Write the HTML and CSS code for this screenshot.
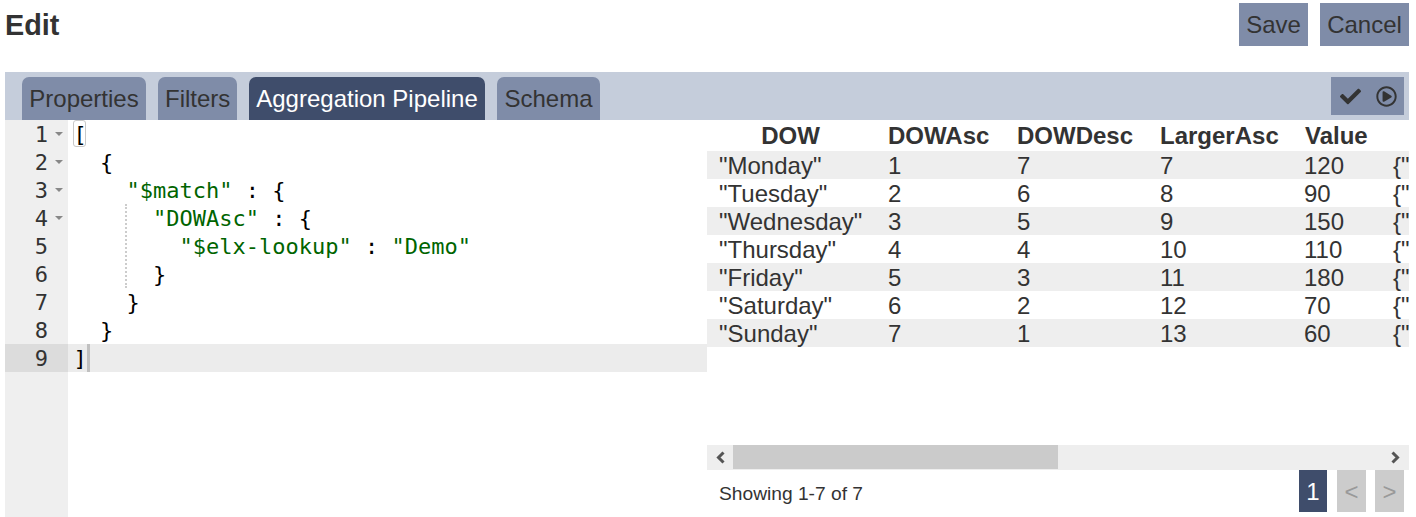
FILE: index.html
```html
<!DOCTYPE html>
<html lang="en">
<head>
<meta charset="utf-8">
<title>Edit</title>
<link rel="stylesheet" href="styles.css">
</head>
<body>
<div class="page">
  <header class="top">
    <h1 class="title">Edit</h1>
    <div class="actions">
      <button class="btn btn-save">Save</button>
      <button class="btn btn-cancel">Cancel</button>
    </div>
  </header>
  <nav class="tabbar">
    <div class="tabs">
      <a class="tab tab-a">Properties</a>
      <a class="tab tab-b">Filters</a>
      <a class="tab tab-c active">Aggregation Pipeline</a>
      <a class="tab tab-d">Schema</a>
    </div>
    <div class="tools">
      <svg class="ico-check" viewBox="0 0 512 512"><path d="M173.898 439.404l-166.4-166.4c-9.997-9.997-9.997-26.206 0-36.204l36.203-36.204c9.997-9.998 26.207-9.998 36.204 0L192 312.69 432.095 72.596c9.997-9.997 26.207-9.997 36.204 0l36.203 36.204c9.997 9.997 9.997 26.206 0 36.204l-294.4 294.401c-9.998 9.997-26.207 9.997-36.204-.001z"/></svg>
      <svg class="ico-play" viewBox="0 0 512 512"><path d="M371.7 238l-176-107c-15.8-8.8-35.7 2.5-35.7 21v208c0 18.4 19.8 29.8 35.7 21l176-101c16.4-9.1 16.4-32.8 0-42zM504 256C504 119 393 8 256 8S8 119 8 256s111 248 248 248 248-111 248-248zm-448 0c0-110.5 89.5-200 200-200s200 89.5 200 200-89.5 200-200 200S56 366.5 56 256z"/></svg>
    </div>
  </nav>
  <main class="split">
    <section class="editor">
      <div class="gutter">
        <div class="gl">1<i class="fold"></i></div>
        <div class="gl">2<i class="fold"></i></div>
        <div class="gl">3<i class="fold"></i></div>
        <div class="gl">4<i class="fold"></i></div>
        <div class="gl">5<i class="nofold"></i></div>
        <div class="gl">6<i class="nofold"></i></div>
        <div class="gl">7<i class="nofold"></i></div>
        <div class="gl">8<i class="nofold"></i></div>
        <div class="gl gl-active">9<i class="nofold"></i></div>
      </div>
      <div class="code">
        <div class="bracket-box"></div>
        <div class="guide"></div>
        <div class="cl">[</div>
        <div class="cl">  {</div>
        <div class="cl">    <span class="str">"$match"</span> : {</div>
        <div class="cl">      <span class="str">"DOWAsc"</span> : {</div>
        <div class="cl">        <span class="str">"$elx-lookup"</span> : <span class="str">"Demo"</span></div>
        <div class="cl">      }</div>
        <div class="cl">    }</div>
        <div class="cl">  }</div>
        <div class="cl cl-active">]<span class="caret"></span></div>
      </div>
    </section>
    <section class="results">
      <div class="tablewrap">
        <table class="grid">
          <colgroup><col class="c1"><col class="c2"><col class="c3"><col class="c4"><col class="c5"><col class="c6"></colgroup>
          <thead><tr><th>DOW</th><th>DOWAsc</th><th>DOWDesc</th><th>LargerAsc</th><th>Value</th><th></th></tr></thead>
          <tbody>
            <tr><td>"Monday"</td><td>1</td><td>7</td><td>7</td><td>120</td><td>{"</td></tr>
            <tr><td>"Tuesday"</td><td>2</td><td>6</td><td>8</td><td>90</td><td>{"</td></tr>
            <tr><td>"Wednesday"</td><td>3</td><td>5</td><td>9</td><td>150</td><td>{"</td></tr>
            <tr><td>"Thursday"</td><td>4</td><td>4</td><td>10</td><td>110</td><td>{"</td></tr>
            <tr><td>"Friday"</td><td>5</td><td>3</td><td>11</td><td>180</td><td>{"</td></tr>
            <tr><td>"Saturday"</td><td>6</td><td>2</td><td>12</td><td>70</td><td>{"</td></tr>
            <tr><td>"Sunday"</td><td>7</td><td>1</td><td>13</td><td>60</td><td>{"</td></tr>
          </tbody>
        </table>
      </div>
      <div class="hscroll">
        <div class="sb-btn"><svg viewBox="0 0 12 13"><path d="M9.5 1.5L4.5 6.5l5 5" fill="none" stroke="#555" stroke-width="3"/></svg></div>
        <div class="sb-track"><div class="sb-thumb"></div></div>
        <div class="sb-btn"><svg viewBox="0 0 12 13"><path d="M2.5 1.5l5 5-5 5" fill="none" stroke="#555" stroke-width="3"/></svg></div>
      </div>
      <div class="pager">
        <span class="count">Showing 1-7 of 7</span>
        <div class="pages">
          <span class="pg pg-cur">1</span>
          <span class="pg pg-off pg-prev">&lt;</span>
          <span class="pg pg-off">&gt;</span>
        </div>
      </div>
    </section>
  </main>
</div>
</body>
</html>
```
FILE: styles.css
```css
* { box-sizing: border-box; }
html, body { margin: 0; height: 100%; background: #fff; overflow: hidden; }
body { font-family: "Liberation Sans", Arial, sans-serif; font-size: 24px; color: #333; }
.page { height: 517px; padding: 0 7px 0 5px; display: flex; flex-direction: column; }

.top { height: 72px; display: flex; justify-content: space-between; align-items: flex-start; flex: none; }
.title { margin: 9px 0 0; font-size: 28.8px; line-height: 33px; font-weight: bold; color: #333; }
.actions { display: flex; gap: 12px; padding-top: 3px; }
.btn { height: 43px; border: 0; padding: 0; background: #7f8ca8; color: #333; font: inherit; }
.btn-save { width: 69px; }
.btn-cancel { width: 89px; }

.tabbar { flex: none; height: 48px; background: #c5cddb; display: flex; justify-content: space-between; padding: 5px 5px 0 17px; }
.tabs { display: flex; gap: 12px; }
.tab { height: 43px; line-height: 44px; padding: 0 7px; background: #7f8ca8; color: #333; border-radius: 7px 7px 0 0; text-align: center; }
.tab-a { width: 124px; }
.tab-b { width: 79px; }
.tab-c { width: 236px; }
.tab-d { width: 103px; }
.tab.active { background: #3f4d6b; color: #fff; }
.tools { width: 73px; height: 38px; background: #7f8ca8; display: flex; align-items: center; padding-left: 9px; gap: 15px; }
.ico-check { width: 21px; height: 21px; fill: #333; flex: none; }
.ico-play { width: 21px; height: 21px; fill: #333; flex: none; }

.split { flex: 1; display: flex; min-height: 0; }
.editor { width: 702px; flex: none; display: flex; font-family: "DejaVu Sans Mono", monospace; font-size: 22px; line-height: 28px; color: #000; }
.gutter { width: 63px; flex: none; background: #efefef; color: #333; }
.gl { height: 28px; display: flex; justify-content: flex-end; align-items: center; padding: 1px 5px 0 0; }
.gl-active { background: #dcdcdc; }
.fold { width: 15px; height: 100%; position: relative; flex: none; }
.fold::after { content: ""; position: absolute; left: 7px; top: 11px; border: 4px solid transparent; border-top: 4px solid #888; border-bottom: 0; }
.nofold { width: 15px; flex: none; }
.code { flex: 1; position: relative; }
.cl { height: 28px; padding: 1px 0 0 5.5px; white-space: pre; }
.cl-active { background: #ececec; position: relative; }
.str { color: #006400; }
.caret { position: absolute; left: 19px; top: 0; width: 3px; height: 28px; background: #c0c0c0; }
.bracket-box { position: absolute; left: 5px; top: 0; width: 13px; height: 27px; border: 1px solid #c8c8c8; border-radius: 3px; }
.guide { position: absolute; left: 57px; top: 84px; height: 84px; border-left: 2px dotted #ccc; }

.results { flex: 1; min-width: 0; display: flex; flex-direction: column; }
.tablewrap { height: 325px; overflow: hidden; flex: none; }
.grid { table-layout: fixed; width: 1404px; border-collapse: collapse; }
.c1 { width: 169px; }
.c2 { width: 129px; }
.c3 { width: 143px; }
.c4 { width: 145px; }
.c5 { width: 88px; }
.grid th { height: 31px; padding: 0 12px; font-weight: bold; text-align: center; white-space: nowrap; }
.grid th:first-child { padding-right: 14px; }
.grid th:not(:first-child) { text-align: left; }
.grid td { height: 28px; padding: 1px 12px 0; line-height: 27px; white-space: nowrap; overflow: hidden; }
.grid td:first-child { padding-right: 0; }
.grid td:nth-child(5) { padding-left: 11px; }
.grid tbody tr:nth-child(odd) { background: #eee; }

.hscroll { height: 25px; flex: none; display: flex; background: #eee; }
.sb-btn { width: 26px; flex: none; display: flex; align-items: center; justify-content: center; }
.sb-btn svg { width: 12px; height: 13px; }
.sb-track { flex: 1; }
.sb-thumb { width: 325px; height: 24px; background: #cbcbcb; }

.pager { height: 42px; flex: none; display: flex; justify-content: space-between; align-items: center; padding: 0 5px 0 12px; font-size: 19.2px; }
.count { padding-top: 5px; }
.pages { display: flex; }
.pg { width: 28px; height: 42px; display: flex; align-items: center; justify-content: center; font-size: 24px; padding-top: 1px; }
.pg-cur { background: #3f4d6b; color: #fff; }
.pg-off { width: 29px; margin-left: 9px; background: #ccc; color: #999; }
.pg-prev { margin-left: 10px; }
```
